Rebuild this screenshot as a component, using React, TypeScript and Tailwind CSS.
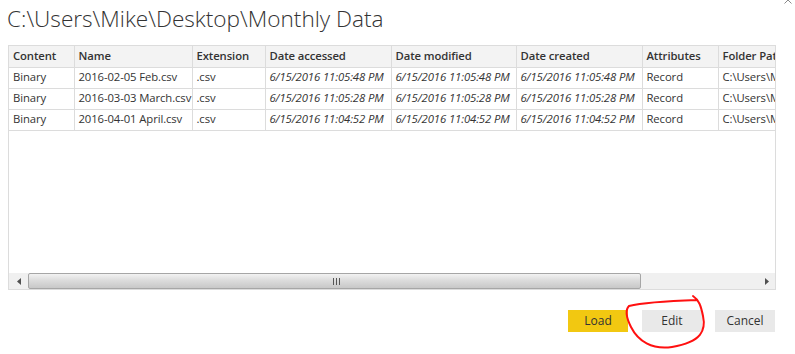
const cols = [
  { label: "Content", w: 65 },
  { label: "Name", w: 118 },
  { label: "Extension", w: 73 },
  { label: "Date accessed", w: 126 },
  { label: "Date modified", w: 125 },
  { label: "Date created", w: 126 },
  { label: "Attributes", w: 76 },
  { label: "Folder Path", w: 160 },
]

const rows = [
  ["Binary", "2016-02-05 Feb.csv", ".csv", "6/15/2016 11:05:48 PM", "6/15/2016 11:05:48 PM", "6/15/2016 11:05:48 PM", "Record", "C:\\Users\\Mike\\Desktop\\Monthly Data\\"],
  ["Binary", "2016-03-03 March.csv", ".csv", "6/15/2016 11:05:28 PM", "6/15/2016 11:05:28 PM", "6/15/2016 11:05:28 PM", "Record", "C:\\Users\\Mike\\Desktop\\Monthly Data\\"],
  ["Binary", "2016-04-01 April.csv", ".csv", "6/15/2016 11:04:52 PM", "6/15/2016 11:04:52 PM", "6/15/2016 11:04:52 PM", "Record", "C:\\Users\\Mike\\Desktop\\Monthly Data\\"],
]

const italicCols = [3, 4, 5]

function ScrollBar() {
  return (
    <div className="flex h-[16px] bg-[#f0f0f0]">
      {/* flecha izquierda */}
      <div className="flex w-[19px] items-center justify-center">
        <svg width="4" height="7" viewBox="0 0 4 7">
          <path d="M4 0 L0 3.5 L4 7 Z" fill="#505050" />
        </svg>
      </div>
      {/* thumb */}
      <div className="flex w-[613px] items-center justify-center rounded-[2px] border border-[#a6a6a6] bg-gradient-to-b from-[#f2f2f2] via-[#dadada] to-[#c8c8c8]">
        <div className="ml-[4px] flex gap-[2px]">
          <div className="h-[7px] w-px bg-[#555]" />
          <div className="h-[7px] w-px bg-[#555]" />
          <div className="h-[7px] w-px bg-[#555]" />
        </div>
      </div>
      <div className="flex-1" />
      {/* flecha derecha */}
      <div className="flex w-[17px] items-center justify-center">
        <svg width="4" height="7" viewBox="0 0 4 7">
          <path d="M0 0 L4 3.5 L0 7 Z" fill="#505050" />
        </svg>
      </div>
    </div>
  )
}

export default function App() {
  return (
    <div
      className="relative h-[354px] w-[795px] overflow-hidden bg-white text-[#333]"
      style={{ fontFamily: '"Open Sans", "Noto Sans", sans-serif' }}
    >
      {/* cerrar */}
      <svg className="absolute right-[3px] top-[-4px]" width="8" height="8" viewBox="0 0 8 8">
        <path d="M0.5 0.5 L7.5 7.5 M7.5 0.5 L0.5 7.5" stroke="#8a8a8a" strokeWidth="1" />
      </svg>

      {/* Título */}
      <h1 className="pl-[7px] pt-[4px] text-[22.6px] font-light leading-[30px] text-[#333]">
        C:\Users\Mike\Desktop\Monthly Data
      </h1>

      {/* Tabla */}
      <div className="ml-[8px] mt-[11px] flex h-[245px] w-[768px] flex-col border border-[#dcdcdc] bg-white">
        <div className="flex-1 overflow-hidden">
          <table className="table-fixed border-collapse text-[11.3px] tracking-[-0.1px]" style={{ width: 869 }}>
            <colgroup>
              {cols.map((c) => (
                <col key={c.label} style={{ width: c.w }} />
              ))}
            </colgroup>
            <thead>
              <tr className="h-[21px] bg-[#f3f3f3]">
                {cols.map((c, i) => (
                  <th
                    key={c.label}
                    className={`overflow-hidden whitespace-nowrap border-b border-[#dcdcdc] pl-[4px] text-left font-semibold ${i > 0 ? "border-l" : ""}`}
                  >
                    {c.label}
                  </th>
                ))}
              </tr>
            </thead>
            <tbody>
              {rows.map((r, ri) => (
                <tr key={ri} className="h-[21px]">
                  {r.map((v, ci) => (
                    <td
                      key={ci}
                      className={`overflow-hidden whitespace-nowrap border-b border-[#dcdcdc] pl-[4px] ${ci > 0 ? "border-l" : ""} ${italicCols.includes(ci) ? "italic" : ""}`}
                    >
                      {v}
                    </td>
                  ))}
                </tr>
              ))}
            </tbody>
          </table>
        </div>
        <ScrollBar />
      </div>

      {/* Botones */}
      <div className="mr-[20px] mt-[20px] flex justify-end gap-[14px] text-[12px]">
        <button className="h-[22px] w-[60px] bg-[#f2c811] text-[#333]">Load</button>
        <button className="h-[22px] w-[60px] bg-[#e9e9e9] text-[#333]">Edit</button>
        <button className="-ml-[1px] h-[22px] w-[60px] bg-[#e9e9e9] text-[#333]">Cancel</button>
      </div>

      {/* círculo rojo a mano */}
      <svg className="absolute left-0 top-0" width="795" height="354" viewBox="0 0 795 354" fill="none">
        <path
          d="M693 296 C699 300, 701 306, 703 316 C706 330, 702 342, 672 347 C652 350, 638 341, 631 327 C626 317, 625 310, 629 306 C645 302, 668 301, 697 300"
          stroke="#ff1010"
          strokeWidth="2"
          strokeLinecap="round"
        />
      </svg>
    </div>
  )
}
